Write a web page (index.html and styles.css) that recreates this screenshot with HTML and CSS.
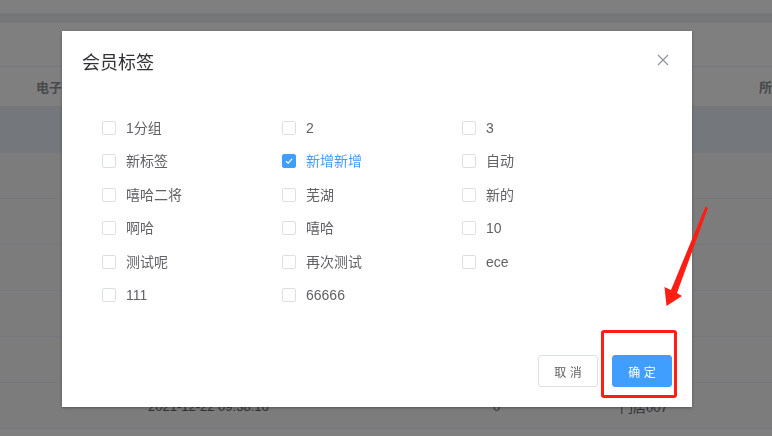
FILE: index.html
```html
<!DOCTYPE html>
<html lang="zh">
<head>
<meta charset="utf-8">
<link rel="stylesheet" href="styles.css">
</head>
<body>
<div class="page">
  <div class="topbar"></div>
  <div class="band"></div>
  <div class="card-top"></div>
  <div class="table">
    <div class="row head"><span class="c1">电子邮箱</span><span class="c-end">所</span></div>
    <div class="row hl"></div>
    <div class="row"></div>
    <div class="row"></div>
    <div class="row"></div>
    <div class="row"></div>
    <div class="row"></div>
    <div class="row last"><span class="date">2021-12-22 09:38:16</span><span class="zero">0</span><span class="store">门店007</span></div>
  </div>
</div>
<div class="mask"></div>
<div class="dialog">
  <div class="dlg-head">
    <span class="dlg-title">会员标签</span>
    <svg class="close" width="12" height="12" viewBox="0 0 12 12"><path d="M1 1L11 11M11 1L1 11" stroke="#909399" stroke-width="1.2" fill="none"/></svg>
  </div>
  <div class="dlg-body">
    <div class="grid">
      <label class="cb"><span class="box"></span><span class="lbl">1分组</span></label>
      <label class="cb"><span class="box"></span><span class="lbl">2</span></label>
      <label class="cb"><span class="box"></span><span class="lbl">3</span></label>
      <label class="cb"><span class="box"></span><span class="lbl">新标签</span></label>
      <label class="cb on"><span class="box"><svg width="14" height="14" viewBox="0 0 14 14"><path d="M4 7.2L6.2 9.2L10 4.8" stroke="#fff" stroke-width="1.2" fill="none"/></svg></span><span class="lbl">新增新增</span></label>
      <label class="cb"><span class="box"></span><span class="lbl">自动</span></label>
      <label class="cb"><span class="box"></span><span class="lbl">嘻哈二将</span></label>
      <label class="cb"><span class="box"></span><span class="lbl">芜湖</span></label>
      <label class="cb"><span class="box"></span><span class="lbl">新的</span></label>
      <label class="cb"><span class="box"></span><span class="lbl">啊哈</span></label>
      <label class="cb"><span class="box"></span><span class="lbl">嘻哈</span></label>
      <label class="cb"><span class="box"></span><span class="lbl">10</span></label>
      <label class="cb"><span class="box"></span><span class="lbl">测试呢</span></label>
      <label class="cb"><span class="box"></span><span class="lbl">再次测试</span></label>
      <label class="cb"><span class="box"></span><span class="lbl">ece</span></label>
      <label class="cb"><span class="box"></span><span class="lbl">111</span></label>
      <label class="cb"><span class="box"></span><span class="lbl">66666</span></label>
    </div>
  </div>
  <div class="dlg-foot">
    <button class="btn">取 消</button>
    <button class="btn primary">确 定</button>
  </div>
</div>
<div class="redbox"></div>
<svg class="arrow" width="772" height="436" viewBox="0 0 772 436">
  <path d="M705.5 206.5L708 208L677 293L682 296L666.5 306L664.5 287L671 290Z" fill="#ff1e14"/>
</svg>
</body>
</html>
```

FILE: styles.css
```css
* { box-sizing: border-box; }
html, body { margin: 0; padding: 0; }
body {
  width: 772px;
  height: 436px;
  overflow: hidden;
  font-family: "Liberation Sans", "Noto Sans CJK SC", sans-serif;
  background: #fff;
}
.page { width: 772px; }
.topbar { height: 13px; background: #fff; }
.band { height: 10px; background: #eceef1; }
.card-top { height: 44px; background: #fff; border-bottom: 1px solid #ebeef5; }
.row {
  height: 46px;
  border-bottom: 1px solid #ebeef5;
  display: flex;
  align-items: center;
  font-size: 13px;
  color: #606266;
  background: #f8f8f8;
}
.row.head {
  height: 40px;
  font-weight: bold;
  color: #909399;
  justify-content: space-between;
  padding: 0 0 0 36px;
  background: #fff;
}
.row.hl { background: #e8eef7; }
.row.last { padding-left: 148px; padding-top: 2px; }
.date { width: 345px; }
.zero { width: 127px; }
.mask {
  position: fixed;
  inset: 0;
  background: rgba(0, 0, 0, 0.5);
}
.dialog {
  position: fixed;
  left: 62px;
  top: 31px;
  width: 630px;
  height: 376px;
  background: #fff;
  box-shadow: 0 1px 3px rgba(0, 0, 0, 0.3);
  display: flex;
  flex-direction: column;
}
.dlg-head {
  padding: 20px 20px 10px;
  display: flex;
  justify-content: space-between;
  align-items: center;
}
.dlg-title { font-size: 18px; line-height: 24px; color: #303133; }
.close { margin-top: -6px; margin-right: 3px; }
.dlg-body { padding: 35px 20px 0 40px; flex: 1; }
.grid {
  display: grid;
  grid-template-columns: repeat(3, 180px);
  grid-auto-rows: 33.4px;
}
.cb {
  display: flex;
  align-items: center;
  gap: 10px;
  font-size: 14px;
  color: #606266;
  height: 16px;
}
.lbl { display: block; line-height: 16px; height: 16px; }
.box {
  width: 14px;
  height: 14px;
  border: 1px solid #dcdfe6;
  border-radius: 2px;
  background: #fff;
  display: block;
  position: relative;
  flex: none;
}
.box svg { position: absolute; left: -1px; top: -1px; }
.cb.on .box { background: #409eff; border-color: #409eff; }
.cb.on { color: #409eff; }
.dlg-foot {
  padding: 0 20px 20px;
  display: flex;
  justify-content: flex-end;
  gap: 14px;
}
.btn {
  height: 32px;
  width: 60px;
  border: 1px solid #dcdfe6;
  border-radius: 3px;
  background: #fff;
  color: #606266;
  font-size: 12px;
  font-family: "Liberation Sans", "Noto Sans CJK SC", sans-serif;
  padding: 0;
}
.btn.primary { background: #409eff; border-color: #409eff; color: #fff; }
.redbox {
  position: fixed;
  left: 601px;
  top: 330px;
  width: 76px;
  height: 68px;
  border: 3px solid #ff1e14;
  border-radius: 3px;
}
.arrow { position: fixed; left: 0; top: 0; }
```
